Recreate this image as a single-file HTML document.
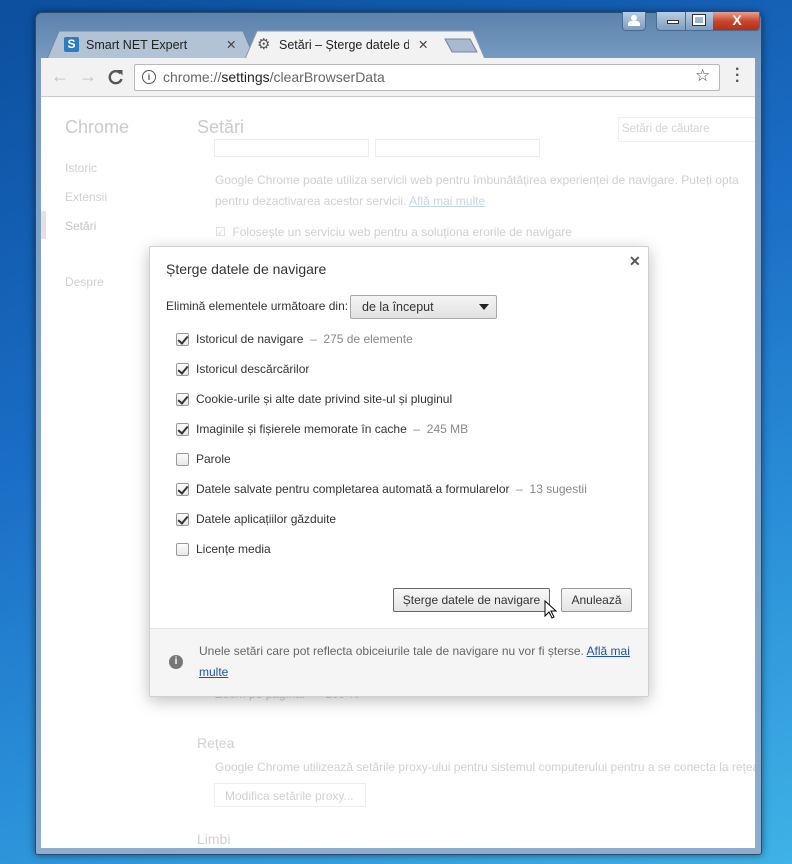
<!DOCTYPE html>
<html><head><meta charset="utf-8"><style>
*{margin:0;padding:0;box-sizing:border-box}
body{width:792px;height:864px;overflow:hidden;position:relative;font-family:"Liberation Sans",sans-serif;background:linear-gradient(160deg,#0c4f9e 0%,#1a6cc4 40%,#2a8fd8 70%,#3fb2e6 100%)}
.a{position:absolute}
.win{left:35px;top:12px;width:727px;height:843px;border-radius:7px 7px 3px 3px;background:linear-gradient(180deg,#5b82ad 0%,#7a9dc2 6%,#8eaccb 100%);border:1px solid #2a4a70;box-shadow:0 0 8px rgba(0,0,0,.5)}
.content{left:41px;top:97px;width:714px;height:751px;background:#fff;overflow:hidden}
.toolbar{left:41px;top:58px;width:714px;height:39px;background:#f2f2f2;border-bottom:1px solid #c8c8c8}
.tab{top:31px;height:28px;font-size:12.5px;color:#222;line-height:28px}
.faint{color:#d0d0d0}
.cb{position:absolute;left:26px;width:13px;height:13px;border:1px solid #9a9a9a;border-radius:2px;background:linear-gradient(#fdfdfd,#e8e8e8)}
.cb.c::after{content:"";position:absolute;left:3px;top:0px;width:4px;height:8px;border:solid #333;border-width:0 2px 2px 0;transform:rotate(40deg)}
.row{position:absolute;left:46px;font-size:12px;color:#333;white-space:nowrap}
.row span{color:#888}
.btn{position:absolute;height:24px;border:1px solid #9a9a9a;border-radius:2px;background:linear-gradient(#f8f8f8,#e4e4e4);font-size:12px;color:#333;text-align:center;line-height:22px;white-space:nowrap}
</style></head><body>
<div class="a win"></div>
<div class="a" style="left:622px;top:12px;width:24px;height:19px;border:1px solid #4a6a90;border-top:none;border-radius:0 0 4px 4px;background:linear-gradient(#b9cde3,#7e9dc0)"><div class="a" style="left:8px;top:3px;width:6px;height:6px;border-radius:50%;background:#fff"></div><div class="a" style="left:5px;top:9px;width:12px;height:5px;background:#fff;border-radius:3px 3px 0 0"></div></div>
<div class="a" style="left:656px;top:12px;width:104px;height:19px;border:1px solid #4a6a90;border-top:none;border-radius:0 0 4px 4px;background:linear-gradient(#b9cde3,#7e9dc0);overflow:hidden">
<div class="a" style="left:10px;top:8px;width:12px;height:4px;background:#fff;border:1px solid #333"></div>
<div class="a" style="left:28px;top:0;width:1px;height:19px;background:#4a6a90"></div>
<div class="a" style="left:36px;top:3px;width:12px;height:10px;border:2px solid #fff;outline:1px solid #333"></div>
<div class="a" style="left:56px;top:0;width:48px;height:19px;background:linear-gradient(#e8a090,#c8442c 50%,#b52b14);color:#fff;font-weight:bold;font-size:14px;text-align:center;line-height:17px">X</div></div>
<svg class="a" style="left:45px;top:30px" width="440" height="30"><path d="M2 29 L14 1 H198 L210 29Z" fill="#b2c3d5" stroke="#6d87a5"/><path d="M200 29 L212 1 H428 L440 29Z" fill="#f2f2f2" stroke="#8a9bb0"/><path d="M400 9 H425 L432 22 H407Z" fill="#a9bace" stroke="#6d87a5"/></svg>
<div class="a" style="left:64px;top:37px;width:15px;height:15px;background:#2e7bbf;border-radius:2px;color:#fff;font-size:12px;font-weight:bold;text-align:center;line-height:15px">S</div>
<div class="a tab" style="left:86px">Smart NET Expert</div>
<div class="a tab" style="left:226px;color:#444">✕</div>
<div class="a tab" style="left:257px;font-size:15px;color:#555">⚙</div>
<div class="a tab" style="left:279px;width:130px;overflow:hidden;white-space:nowrap">Setări – Șterge datele de</div>
<div class="a tab" style="left:418px;color:#444">✕</div>
<div class="a toolbar"></div>
<div class="a" style="left:51px;top:66px;font-size:18px;color:#c0c0c0">←</div>
<div class="a" style="left:79px;top:66px;font-size:18px;color:#c0c0c0">→</div>
<svg class="a" style="left:107px;top:68px" width="18" height="18"><path d="M13.5 5.5 A6 6 0 1 0 14.5 11" fill="none" stroke="#555" stroke-width="2.4"/><path d="M10 2 H15.5 V7.5Z" fill="#555"/></svg>
<div class="a" style="left:134px;top:64px;width:586px;height:27px;background:#fff;border:1px solid #b8b8b8;border-radius:2px"></div>
<div class="a" style="left:142px;top:70px;width:14px;height:14px;border:1.5px solid #555;border-radius:50%;font-size:9px;text-align:center;line-height:12px;color:#555;font-weight:bold">i</div>
<div class="a" style="left:163px;top:69px;font-size:14px;color:#666">chrome://<span style="color:#222">settings</span>/clearBrowserData</div>
<div class="a" style="left:695px;top:66px;font-size:17px;color:#444">☆</div>
<div class="a" style="left:735px;top:67px;font-size:16px;color:#555;line-height:6px;font-weight:bold">·<br>·<br>·</div>
<div class="a content">
<div class="a" style="left:24px;top:20px;font-size:18px;color:#cbcbcb">Chrome</div>
<div class="a" style="left:156px;top:20px;font-size:18px;color:#cbcbcb">Setări</div>
<div class="a" style="left:577px;top:20px;width:140px;height:25px;border:1px solid #eee;font-size:11.5px;color:#d4d4d4;padding:5px 3px">Setări de căutare</div>
<div class="a" style="left:173px;top:42px;width:155px;height:18px;border:1px solid #ececec"></div>
<div class="a" style="left:334px;top:42px;width:165px;height:18px;border:1px solid #ececec"></div>
<div class="a faint" style="left:24px;top:64px;font-size:12px">Istoric</div>
<div class="a faint" style="left:24px;top:93px;font-size:12px">Extensii</div>
<div class="a" style="left:0;top:114px;width:5px;height:28px;background:#e2e2e2"></div>
<div class="a" style="left:24px;top:122px;font-size:12px;color:#c4c4c4">Setări</div>
<div class="a faint" style="left:24px;top:178px;font-size:12px">Despre</div>
<div class="a faint" style="left:174px;top:73px;font-size:12px;line-height:21px;width:540px">Google Chrome poate utiliza servicii web pentru îmbunătățirea experienței de navigare. Puteți opta pentru dezactivarea acestor servicii. <u style="color:#c4d4ee">Află mai multe</u></div>
<div class="a faint" style="left:174px;top:128px;font-size:12px">☑ &nbsp;Folosește un serviciu web pentru a soluționa erorile de navigare</div>
<div class="a faint" style="left:174px;top:590px;font-size:12px">Zoom pe pagină: &nbsp;&nbsp;&nbsp;&nbsp;&nbsp;100 %</div>
<div class="a faint" style="left:156px;top:638px;font-size:14px">Rețea</div>
<div class="a faint" style="left:174px;top:663px;font-size:12px;white-space:nowrap">Google Chrome utilizează setările proxy-ului pentru sistemul computerului pentru a se conecta la rețea</div>
<div class="a faint" style="left:173px;top:686px;width:152px;height:24px;border:1px solid #eee;font-size:12px;padding:5px 10px">Modifica setările proxy...</div>
<div class="a faint" style="left:156px;top:734px;font-size:14px">Limbi</div>
</div>
<div class="a" style="left:149px;top:246px;width:500px;height:451px;background:#fff;border:1px solid #d0d0d0;border-radius:2px;box-shadow:0 4px 16px rgba(0,0,0,.25);overflow:hidden">
<div class="a" style="left:16px;top:14px;font-size:14px;color:#333">Șterge datele de navigare</div>
<div class="a" style="left:479px;top:6px;font-size:14px;color:#555;font-weight:bold">✕</div>
<div class="a" style="left:16px;top:52px;font-size:12px;color:#333">Elimină elementele următoare din:</div>
<div class="a" style="left:200px;top:48px;width:147px;height:24px;border:1px solid #aaa;border-radius:2px;background:linear-gradient(#f4f4f4,#e2e2e2);font-size:12.5px;color:#333;padding:4px 11px">de la început<div class="a" style="right:7px;top:8px;border:5px solid transparent;border-top:6px solid #222;border-bottom:none"></div></div>
<div class="cb c" style="top:86px"></div><div class="row" style="top:85px">Istoricul de navigare <span>&nbsp;–&nbsp; 275 de elemente</span></div>
<div class="cb c" style="top:116px"></div><div class="row" style="top:115px">Istoricul descărcărilor</div>
<div class="cb c" style="top:146px"></div><div class="row" style="top:145px">Cookie-urile și alte date privind site-ul și pluginul</div>
<div class="cb c" style="top:176px"></div><div class="row" style="top:175px">Imaginile și fișierele memorate în cache <span>&nbsp;–&nbsp; 245 MB</span></div>
<div class="cb" style="top:206px"></div><div class="row" style="top:205px">Parole</div>
<div class="cb c" style="top:236px"></div><div class="row" style="top:235px">Datele salvate pentru completarea automată a formularelor <span>&nbsp;–&nbsp; 13 sugestii</span></div>
<div class="cb c" style="top:266px"></div><div class="row" style="top:265px">Datele aplicațiilor găzduite</div>
<div class="cb" style="top:296px"></div><div class="row" style="top:295px">Licențe media</div>
<div class="btn" style="left:243px;top:341px;width:157px;border-color:#666">Șterge datele de navigare</div>
<div class="btn" style="left:411px;top:341px;width:71px">Anulează</div>
<svg class="a" style="left:394px;top:353px" width="14" height="20"><path d="M1 1 V16 L5 12 L8 18 L10 17 L7 11 H12Z" fill="#fff" stroke="#000"/></svg>
<div class="a" style="left:0;top:381px;width:500px;height:70px;background:#f5f5f5;border-top:1px solid #e4e4e4"></div>
<div class="a" style="left:19px;top:408px;width:14px;height:14px;border-radius:50%;background:#777;color:#fff;font-size:10px;font-weight:bold;text-align:center;line-height:14px">i</div>
<div class="a" style="left:49px;top:394px;width:440px;font-size:12px;line-height:21px;color:#666">Unele setări care pot reflecta obiceiurile tale de navigare nu vor fi șterse. <u style="color:#1f50b8">Află mai multe</u></div>
</div>
</body></html>
